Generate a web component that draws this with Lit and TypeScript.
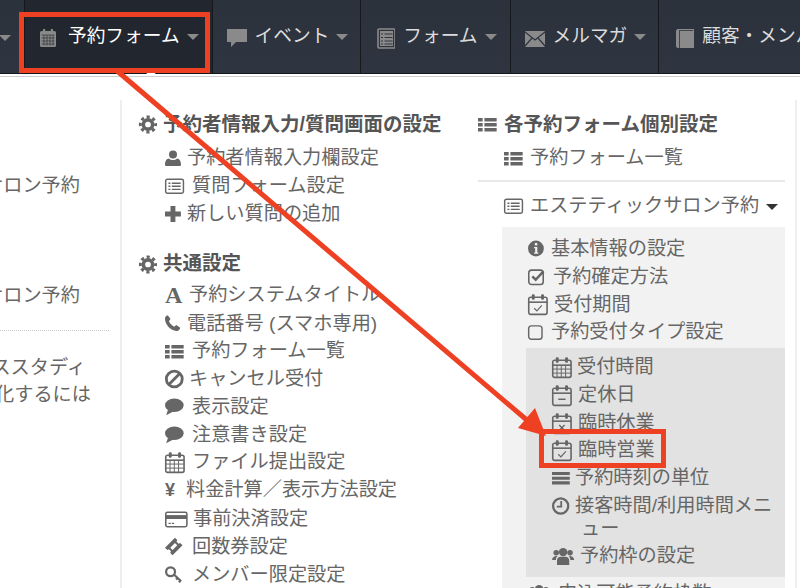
import { LitElement, html, css, svg } from "lit";
import { customElement } from "lit/decorators.js";

const cal = (inner: unknown) => svg`<rect x="1.500" y="3.500" width="15" height="14" rx="1.500" fill="none" stroke="currentColor" stroke-width="1.300"/><path d="M1.500 7.500h15" stroke="currentColor" stroke-width="1.300"/><rect x="4" y="1" width="2.400" height="4.500" rx="1" fill="currentColor"/><rect x="11.600" y="1" width="2.400" height="4.500" rx="1" fill="currentColor"/>${inner}`;

const ICONS: Record<string, unknown> = {
  gear: svg`<circle cx="9" cy="9" r="4.400" fill="none" stroke="currentColor" stroke-width="3.400"/><circle cx="9" cy="9" r="7.200" fill="none" stroke="currentColor" stroke-width="2.800" stroke-dasharray="3 2.650" stroke-dashoffset="1.500"/>`,
  user: svg`<circle cx="9" cy="5.500" r="4" fill="currentColor"/><path d="M2 17c-.8 0-1-.6-1-1.400C1 12 2.600 9.600 5 9.400c1 1 2.400 1.500 4 1.500s3-.5 4-1.500c2.400.2 4 2.600 4 6.200 0 .8-.2 1.400-1 1.400z" fill="currentColor"/>`,
  listalt: svg`<rect x="1" y="3" width="16" height="12.500" rx="1.500" fill="none" stroke="currentColor" stroke-width="1.300"/><path d="M3.500 6.500h1.800M3.500 9.200h1.800M3.500 12h1.800M6.500 6.500h8M6.500 9.200h8M6.500 12h8" stroke="currentColor" stroke-width="1.200"/>`,
  plus: svg`<path d="M7 2.500h4v4.500h4.500v4H11v4.500H7V11H2.500V7H7z" fill="currentColor"/>`,
  phone: svg`<path d="M4.500 2 7 5.500 5.500 7.500c.8 2 2.500 3.800 4.700 4.800l2-1.600 3.500 2.600c-.3 1.600-1.500 3-3.300 2.900C7 15.800 2 10.500 2 5.200 2 3.600 3 2.300 4.500 2z" fill="currentColor"/>`,
  thlist: svg`<path d="M1 3.500h4v3H1zM6.500 3.500H17v3H6.500zM1 7.800h4v3H1zM6.500 7.800H17v3H6.500zM1 12h4v3H1zM6.500 12H17v3H6.500z" fill="currentColor"/>`,
  ban: svg`<circle cx="9" cy="9" r="6.500" fill="none" stroke="currentColor" stroke-width="2.300"/><path d="M4.500 13.500l9-9" stroke="currentColor" stroke-width="2.300"/>`,
  comment: svg`<ellipse cx="9.500" cy="8" rx="8" ry="5.800" fill="currentColor"/><path d="M4 12l-1.500 4.500L9 13z" fill="currentColor"/>`,
  calgrid: svg`${cal(svg`<path d="M5 7.500v10M8.500 7.500v10M12 7.500v10M1.500 10.700h15M1.500 14h15" stroke="currentColor" stroke-width=".8"/>`)}`,
  card: svg`<rect x="1" y="3" width="19" height="13" rx="1.500" fill="none" stroke="currentColor" stroke-width="1.400"/><rect x="1" y="5.500" width="19" height="3.500" fill="currentColor"/><path d="M3.500 13h2M6.500 13h2" stroke="currentColor" stroke-width="1.200"/>`,
  ticket: svg`<path d="M1.500 10 10 1.500l2 2-.6 1.400 1.700 1.700 1.400-.6L16.500 8 8 16.500l-2-2 .6-1.400-1.700-1.700-1.400.6z" fill="currentColor"/><path d="M6 10l4-4 2 2-4 4z" fill="#fff"/>`,
  key: svg`<circle cx="6.500" cy="7" r="4" fill="none" stroke="currentColor" stroke-width="2"/><path d="M9.500 9.500l6.500 6M13 12.500l-1.500 1.500M15.500 15l-1.500 1.500" stroke="currentColor" stroke-width="2"/>`,
  info: svg`<circle cx="9" cy="9" r="7.500" fill="currentColor"/><path d="M7.300 7.500h3v5.200h1v1.300H7.300v-1.300h1V8.800h-1z" fill="#f2f2f2"/><rect x="8" y="3.800" width="2.300" height="2.300" fill="#f2f2f2"/>`,
  checksq: svg`<rect x="1.800" y="2.800" width="13" height="13" rx="2.500" fill="none" stroke="currentColor" stroke-width="1.400"/><path d="M5 8.500l3 3 7-7.500" fill="none" stroke="currentColor" stroke-width="2.300"/>`,
  calcheck: svg`${cal(svg`<path d="M6 12.500l2.200 2.200 4-4.500" fill="none" stroke="currentColor" stroke-width="1"/>`)}`,
  calminus: svg`${cal(svg`<path d="M6 12.500h6" stroke="currentColor" stroke-width="1.200"/>`)}`,
  calx: svg`${cal(svg`<path d="M6.800 10.700l4.400 4.400M11.200 10.700l-4.400 4.400" stroke="currentColor" stroke-width="1.100"/>`)}`,
  square: svg`<rect x="2" y="3.500" width="12" height="12" rx="2.500" fill="none" stroke="currentColor" stroke-width="1.300"/>`,
  bars: svg`<path d="M1 3.500h16v2.800H1zM1 7.800h16v2.800H1zM1 12h16v2.800H1z" fill="currentColor"/>`,
  clock: svg`<circle cx="9" cy="9" r="6.800" fill="none" stroke="currentColor" stroke-width="2"/><path d="M9.500 4.500v5H5.500" fill="none" stroke="currentColor" stroke-width="1.600"/>`,
  users: svg`<circle cx="10" cy="5.500" r="3.800" fill="currentColor"/><circle cx="3.800" cy="6" r="2.500" fill="currentColor"/><circle cx="16.200" cy="6" r="2.500" fill="currentColor"/><path d="M4.500 17v-4c0-2 1.500-3.400 3-3.400h5c1.500 0 3 1.400 3 3.400v4z" fill="currentColor"/><path d="M0 13c0-2 1.200-4 3.500-4h1.500c-1 1-1.500 2-1.500 3.500H0zM20 13c0-2-1.200-4-3.500-4H15c1 1 1.500 2 1.500 3.500H20z" fill="currentColor"/>`,
  navcal: svg`<rect x="1" y="3" width="16" height="16" rx="1.500" fill="currentColor"/><rect x="4" y="1" width="2.200" height="4" fill="currentColor"/><rect x="11.800" y="1" width="2.200" height="4" fill="currentColor"/><path d="M2.500 7h13M2.500 10h13M2.500 13h13M2.500 16h13M5 7v10.500M8 7v10.500M11 7v10.500M14 7v10.500" stroke="#22262e" stroke-width=".6"/>`,
  navbubble: svg`<path d="M0 1h20v13H9l-5 5v-5H0z" fill="currentColor"/>`,
  navlist: svg`<rect x="1" y="1" width="17" height="19" rx="1" fill="none" stroke="currentColor" stroke-width="1.600"/><rect x="3" y="3" width="13" height="15" fill="currentColor"/><path d="M4 6h2M4 9.500h2M4 13h2M4 16h2M7.500 6h8M7.500 9.500h8M7.500 13h8M7.500 16h8" stroke="#2e3440" stroke-width="1"/>`,
  navmail: svg`<rect x="0" y="3" width="20" height="16" rx="1" fill="currentColor"/><path d="M0 4l10 8 10-8M0 18l7-8M20 18l-7-8" fill="none" stroke="#2e3440" stroke-width="1.200"/>`,
  navbook: svg`<path d="M3 1h16v19H3c-1 0-2-1-2-2V3c0-1 1-2 2-2z" fill="currentColor"/><path d="M4.500 3v17M4 2.500h14" stroke="#2e3440" stroke-width=".8" fill="none"/>`,
};

/* Left edge of the painted shape in each icon's 18-unit box. */
const LEFT: Record<string, number> = {
  gear: 0.5, user: 1, listalt: 0.4, plus: 2.5, phone: 2, thlist: 1, ban: 1.4, comment: 1.5,
  calgrid: 0.9, card: 0.3, ticket: 1.5, key: 1.5, info: 1.5, checksq: 1.1, calcheck: 0.9,
  calminus: 0.9, calx: 0.9, square: 1.4, bars: 1, clock: 1.2, users: 0,
};

type Row = { i: string; t: string; w: number; s?: number; g?: string };

const SECTION_A: Row[] = [
  { i: "user", t: "予約者情報入力欄設定", w: 17, s: 18 },
  { i: "listalt", t: "質問フォーム設定", w: 22, s: 20 },
  { i: "plus", t: "新しい質問の追加", w: 17, s: 22 },
];
const SECTION_B: Row[] = [
  { i: "", g: "A", t: "予約システムタイトル", w: 19 },
  { i: "phone", t: "電話番号 (スマホ専用)", w: 17, s: 20 },
  { i: "thlist", t: "予約フォーム一覧", w: 22, s: 21 },
  { i: "ban", t: "キャンセル受付", w: 19, s: 22 },
  { i: "comment", t: "表示設定", w: 22, s: 21 },
  { i: "comment", t: "注意書き設定", w: 22, s: 21 },
  { i: "calgrid", t: "ファイル提出設定", w: 22, s: 22 },
  { i: "", g: "¥", t: "料金計算／表示方法設定", w: 16 },
  { i: "card", t: "事前決済設定", w: 23, s: 20 },
  { i: "ticket", t: "回数券設定", w: 22, s: 21 },
  { i: "key", t: "メンバー限定設定", w: 22, s: 20 },
];
const PANEL: Row[] = [
  { i: "info", t: "基本情報の設定", w: 18, s: 19 },
  { i: "checksq", t: "予約確定方法", w: 20, s: 20 },
  { i: "calcheck", t: "受付期間", w: 21, s: 22 },
  { i: "square", t: "予約受付タイプ設定", w: 18, s: 20 },
];
const NESTED: Row[] = [
  { i: "calgrid", t: "受付時間", w: 20, s: 22 },
  { i: "calminus", t: "定休日", w: 21, s: 22 },
  { i: "calx", t: "臨時休業", w: 21, s: 22 },
  { i: "calcheck", t: "臨時営業", w: 21, s: 22 },
  { i: "bars", t: "予約時刻の単位", w: 18, s: 20 },
  { i: "clock", t: "接客時間/利用時間メニュー", w: 18, s: 20 },
  { i: "users", t: "予約枠の設定", w: 23, s: 20 },
];
const NAV = [
  { i: "navcal", t: "予約フォーム", w: 18, g: 11, pl: 14, pr: 13, on: true },
  { i: "navbubble", t: "イベント", w: 20, g: 8, pl: 14, pr: 12, on: false },
  { i: "navlist", t: "フォーム", w: 18, g: 8, pl: 16, pr: 13, on: false },
  { i: "navmail", t: "メルマガ", w: 20, g: 8, pl: 14, pr: 12, on: false },
  { i: "navbook", t: "顧客・メンバー管理", w: 20, g: 7, pl: 16, pr: 12, on: false },
];

const icon = (name: string, w: number, s = w) =>
  html`<svg class="ic" width=${s} height=${s} viewBox="${LEFT[name] ?? 0} 0 18 18" style="margin-right:${w - s + 5}px">${ICONS[name]}</svg>`;

const row = (r: Row) => html`<li class="row">
  ${r.g
    ? html`<span class="glyph ${r.g === "A" ? "serif" : ""}" style="width:${r.w}px">${r.g}</span>`
    : icon(r.i, r.w, r.s)}<span>${r.t}</span>
</li>`;

@customElement("app-root")
export class AppRoot extends LitElement {
  static styles = css`
    :host {
      display: block;
      width: 800px;
      height: 588px;
      overflow: hidden;
      position: relative;
      background: #fff;
      font-family: "Liberation Sans", "Noto Sans CJK JP", sans-serif;
      font-size: 19.2px;
      color: #666;
    }
    ul { list-style: none; margin: 0; padding: 0; }
    .nav {
      display: flex;
      height: 74px;
      background: linear-gradient(#2c323c, #2f3540);
      border-bottom: 1px solid #15181d;
      box-sizing: border-box;
      box-shadow: 0 2px 0 #fff, 0 3px 0 #cfcfcf;
      overflow: hidden;
      white-space: nowrap;
      font-size: 18.7px;
    }
    .stub {
      width: 25px;
      flex: none;
      border-right: 1px solid #15181d;
      display: flex;
      align-items: center;
      box-sizing: border-box;
      padding-bottom: 1px;
    }
    .stub .caret { margin-left: -1px; }
    .item {
      display: flex;
      flex: none;
      align-items: center;
      padding-bottom: 7px;
      border-right: 1px solid #15181d;
      color: #dcdcdc;
    }
    .item.on { background: #22262e; color: #fff; }
    .item svg { color: #8a8a8a; flex: none; margin-top: 10px; }
    .caret {
      width: 0; height: 0; flex: none;
      border: 6px solid transparent;
      border-top: 6px solid #8a8a8a;
      border-bottom: 0;
      margin: 3px 0 0 7px;
    }
    .item .caret { margin-top: 8px; }
    .notch {
      position: absolute;
      left: 145px;
      top: 70px;
      border: 6px solid transparent;
      border-top: 0;
      border-bottom: 5px solid #fff;
    }
    .main {
      display: flex;
      margin-top: 26px;
      height: 488px;
    }
    .col1 {
      width: 122px;
      flex: none;
      box-sizing: border-box;
      border-right: 2px solid #eee;
      overflow: hidden;
      padding-top: 72px;
    }
    .l {
      display: flex;
      justify-content: flex-end;
      white-space: nowrap;
      line-height: 27px;
      padding-right: 40px;
    }
    .l.second { margin-top: 83px; }
    .l.third { margin-top: 23px; padding-right: 34px; }
    .l.wide { padding-right: 29px; }
    .dots {
      border-top: 1px dotted #ccc;
      margin: 21px 11px 0 0;
    }
    .col2 {
      width: 356px;
      flex: none;
      box-sizing: border-box;
      padding: 13px 0 0 17px;
    }
    .col3 {
      width: 319px;
      flex: none;
      box-sizing: border-box;
      border-right: 2px solid #eee;
      padding: 13px 10px 0 0;
    }
    .head {
      font-weight: 700;
      font-size: 19.5px;
      color: #555;
      line-height: 23px;
      white-space: nowrap;
    }
    .head + ul { margin-top: 8px; padding-left: 26px; }
    .group2 { margin-top: 25px; }
    .head.group2 + ul { margin-top: 5px; }
    .row {
      display: block;
      line-height: 23px;
      padding: 2.4px 0;
      white-space: normal;
    }
    .ic {
      vertical-align: middle;
      margin-top: -4px;
      margin-bottom: -2px;
      color: #666;
      overflow: visible;
    }
    .glyph {
      display: inline-block;
      font-weight: 700;
      font-size: 18px;
      color: #666;
      margin-right: 5px;
    }
    .glyph.serif {
      font-family: "Liberation Serif", serif;
      font-size: 24px;
      line-height: 23px;
      vertical-align: -2px;
    }
    hr {
      border: 0;
      border-top: 2px solid #e8e8e8;
      margin: 8px 0 10px;
    }
    .top {
      line-height: 23px;
      padding: 2.4px 0;
      margin-left: 26px;
      white-space: nowrap;
    }
    .down {
      display: inline-block;
      width: 0; height: 0;
      border: 6px solid transparent;
      border-top: 6px solid #333;
      border-bottom: 0;
      margin-left: 7px;
      vertical-align: 2px;
    }
    .panel {
      margin: 7px 0 0 24px;
      padding: 8px 0 0;
      background: #f2f2f2;
      height: 400px;
    }
    .panel > ul { padding-left: 26px; }
    .panel > ul.nested {
      margin: 2px 0 0 24px;
      padding: 5px 8px 8px 26px;
      background: #e2e2e2;
    }
    .nested .row { padding-left: 29px; text-indent: -29px; }
    .nested .row:last-child { margin-top: -1px; }
    .nested .ic { text-indent: 0; }
    .panel .tail { padding-top: 2px; }
    .over {
      position: absolute;
      inset: 0;
      pointer-events: none;
    }
  `;

  render() {
    return html`
      <div class="nav">
        <div class="stub"><span class="caret"></span></div>
        ${NAV.map(
          (n) => html`<div class="item ${n.on ? "on" : ""}" style="padding-left:${n.pl}px;padding-right:${n.pr}px">
            <svg width=${n.w} height="21" viewBox="0 0 ${n.w} 21" style="margin-right:${n.g}px">${ICONS[n.i]}</svg>
            <span>${n.t}</span><span class="caret"></span>
          </div>`,
        )}
      </div>
      <div class="notch"></div>
      <div class="main">
        <div class="col1">
          <div class="l">エステティックサロン予約</div>
          <div class="l second">エステティックサロン予約</div>
          <div class="dots"></div>
          <div class="l third">エステティックサロンのケーススタディ</div>
          <div class="l wide">予約を効率化するには</div>
        </div>
        <div class="col2">
          <div class="head">${icon("gear", 19)}<span>予約者情報入力/質問画面の設定</span></div>
          <ul>${SECTION_A.map(row)}</ul>
          <div class="head group2">${icon("gear", 19)}<span>共通設定</span></div>
          <ul>${SECTION_B.map(row)}</ul>
        </div>
        <div class="col3">
          <div class="head">${icon("thlist", 21)}<span>各予約フォーム個別設定</span></div>
          <ul>${row({ i: "thlist", t: "予約フォーム一覧", w: 21 })}</ul>
          <hr />
          <div class="top">${icon("listalt", 21, 20)}<span>エステティックサロン予約</span><span class="down"></span></div>
          <div class="panel">
            <ul>${PANEL.map(row)}</ul>
            <ul class="nested">${NESTED.map(row)}</ul>
            <ul class="tail">${row({ i: "users", t: "申込可能予約枠数", w: 25, s: 20 })}</ul>
          </div>
        </div>
      </div>
      <svg class="over" width="800" height="588" viewBox="0 0 800 588">
        <rect x="21.500" y="14.500" width="186" height="56" fill="none" stroke="#ee4124" stroke-width="5"/>
        <rect x="541.500" y="431.500" width="122" height="34" fill="none" stroke="#ee4124" stroke-width="5"/>
        <path d="M116 70 528 421" stroke="#ee4124" stroke-width="5"/>
        <path d="M546 436 518 428 535 408z" fill="#ee4124"/>
      </svg>
    `;
  }
}
